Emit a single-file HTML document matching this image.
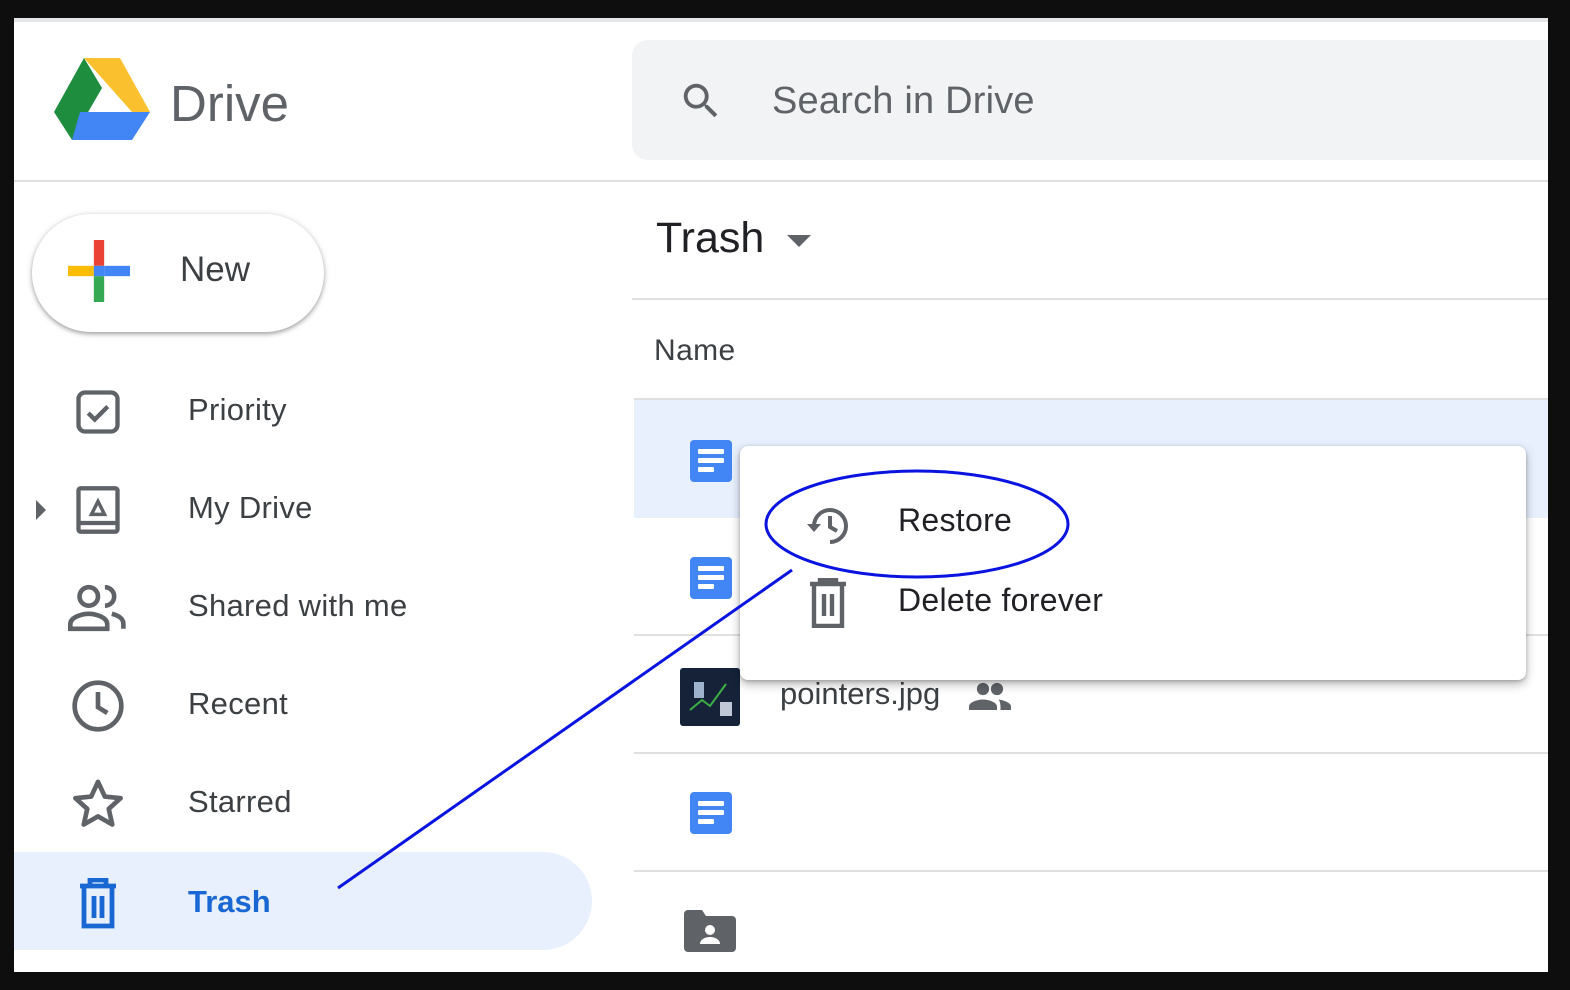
<!DOCTYPE html>
<html><head><meta charset="utf-8"><style>
*{margin:0;padding:0;box-sizing:border-box}
body{width:1570px;height:990px;background:#0e0e0e;position:relative;overflow:hidden;font-family:"Liberation Sans",Arial,sans-serif}
.page{position:absolute;left:14px;top:18px;width:1534px;height:954px;background:#fff;border-top:4px solid #e4e6e8;overflow:hidden}
.abs{position:absolute}
.nav{position:absolute;left:0;width:100%;height:60px}
.nav .lbl{position:absolute;left:174px;top:12px;font-size:31px;color:#3c4043;letter-spacing:.3px}
.hr{position:absolute;height:2px;background:#e0e0e0}
.doc{position:absolute;width:42px;height:42px;background:#4285f4;border-radius:4px}
.doc i{position:absolute;left:8px;height:5px;background:#fff;border-radius:1px}
</style></head><body>
<div class="page">
 <svg class="abs" style="left:40px;top:36px" width="96" height="86" viewBox="0 0 96 86">
  <polygon points="30,0 66,0 96,54 78,54" fill="#fbc02d"/>
  <polygon points="30,0 48,30 18,82 0,54" fill="#1e8e3e"/>
  <polygon points="26,54 96,54 78,82 18,82" fill="#4285f4"/>
 </svg>
 <div class="abs" style="left:156px;top:52px;font-size:51px;color:#5f6368">Drive</div>
 <div class="abs" style="left:618px;top:18px;width:940px;height:120px;background:#f1f3f4;border-radius:16px"></div>
 <svg class="abs" style="left:664px;top:56px" width="46" height="46" viewBox="0 0 24 24"><path fill="#5f6368" d="M15.5 14h-.79l-.28-.27A6.47 6.47 0 0016 9.5 6.5 6.5 0 109.5 16c1.61 0 3.09-.59 4.23-1.57l.27.28v.79l5 4.99L20.49 19l-4.99-5zm-6 0C7.01 14 5 11.99 5 9.5S7.01 5 9.5 5 14 7.01 14 9.5 11.99 14 9.5 14z"/></svg>
 <div class="abs" style="left:758px;top:58px;font-size:38px;color:#5f6368;letter-spacing:.2px">Search in Drive</div>
 <div class="hr" style="left:0;top:158px;width:1534px"></div>
 <div class="abs" style="left:18px;top:192px;width:292px;height:118px;border-radius:59px;background:#fff;box-shadow:0 2px 4px rgba(0,0,0,.3),0 1px 8px rgba(0,0,0,.12)"></div>
 <svg class="abs" style="left:54px;top:218px" width="62" height="62" viewBox="0 0 48 48">
  <rect x="0" y="20" width="20" height="8" fill="#fbbc04"/><rect x="20" y="0" width="8" height="20" fill="#ea4335"/>
  <rect x="28" y="20" width="20" height="8" fill="#4285f4"/><rect x="20" y="28" width="8" height="20" fill="#34a853"/>
  <rect x="20" y="20" width="8" height="8" fill="#4285f4"/>
 </svg>
 <div class="abs" style="left:166px;top:228px;font-size:35px;color:#3c4043">New</div>
 <div class="nav" style="top:358px"><svg class="abs" style="left:58px;top:6px" width="52" height="52" viewBox="0 0 24 24"><rect x="3" y="3" width="18" height="18" rx="3" fill="none" stroke="#5f6368" stroke-width="2"/><path d="M7.5 12.5l3 3 6-6" fill="none" stroke="#5f6368" stroke-width="2"/></svg><div class="lbl">Priority</div></div>
 <div class="nav" style="top:456px"><svg class="abs" style="left:20px;top:20px" width="14" height="24"><path d="M2 2l10 10-10 10z" fill="#5f6368"/></svg><svg class="abs" style="left:58px;top:6px" width="52" height="52" viewBox="0 0 24 24"><rect x="3" y="2" width="18" height="20" rx="1" fill="none" stroke="#5f6368" stroke-width="2"/><line x1="3" y1="18" x2="21" y2="18" stroke="#5f6368" stroke-width="2"/><path d="M9 14l3-6 3 6z" fill="none" stroke="#5f6368" stroke-width="1.6"/></svg><div class="lbl">My Drive</div></div>
 <div class="nav" style="top:554px"><svg class="abs" style="left:54px;top:6px" width="60" height="52" viewBox="0 0 26 22"><circle cx="9" cy="6" r="4" fill="none" stroke="#5f6368" stroke-width="2"/><path d="M1 20v-2c0-3 5-4.5 8-4.5s8 1.5 8 4.5v2z" fill="none" stroke="#5f6368" stroke-width="2"/><path d="M16 2a4 4 0 010 8M19 13.5c3 .8 5 2 5 4.5v2" fill="none" stroke="#5f6368" stroke-width="2"/></svg><div class="lbl">Shared with me</div></div>
 <div class="nav" style="top:652px"><svg class="abs" style="left:56px;top:4px" width="56" height="56" viewBox="0 0 24 24"><circle cx="12" cy="12" r="10" fill="none" stroke="#5f6368" stroke-width="2"/><path d="M12 6v6.5l4 2.5" fill="none" stroke="#5f6368" stroke-width="2"/></svg><div class="lbl">Recent</div></div>
 <div class="nav" style="top:750px"><svg class="abs" style="left:56px;top:4px" width="56" height="56" viewBox="0 0 24 24"><path d="M12 2.5l2.9 6.3 6.8.7-5.1 4.6 1.5 6.7L12 17.3l-6.1 3.5 1.5-6.7L2.3 9.5l6.8-.7z" fill="none" stroke="#5f6368" stroke-width="2" stroke-linejoin="round"/></svg><div class="lbl">Starred</div></div>
 <div class="abs" style="left:-40px;top:830px;width:618px;height:98px;border-radius:0 49px 49px 0;background:#e8f0fe"></div>
 <div class="nav" style="top:850px"><svg class="abs" style="left:60px;top:6px" width="48" height="52" viewBox="0 0 24 26"><path d="M3 4h18M8 4V1h8v3M5 4v20h14V4" fill="none" stroke="#1967d2" stroke-width="2.4"/><path d="M10 9v11M14 9v11" stroke="#1967d2" stroke-width="2.4"/></svg><div class="lbl" style="color:#1967d2;font-weight:bold;letter-spacing:0">Trash</div></div>
 <div class="abs" style="left:642px;top:192px;font-size:43px;color:#202124">Trash</div>
 <svg class="abs" style="left:772px;top:212px" width="26" height="14"><path d="M1 1h24L13 13z" fill="#5f6368"/></svg>
 <div class="hr" style="left:618px;top:276px;width:916px"></div>
 <div class="abs" style="left:640px;top:312px;font-size:30px;color:#3c4043;letter-spacing:.4px">Name</div>
 <div class="hr" style="left:620px;top:376px;width:914px"></div>
 <div class="abs" style="left:620px;top:378px;width:914px;height:118px;background:#e8f0fe"></div>
 <div class="doc" style="left:676px;top:418px"><i style="top:9px;width:26px"></i><i style="top:18px;width:26px"></i><i style="top:27px;width:16px"></i></div>
 <div class="doc" style="left:676px;top:535px"><i style="top:9px;width:26px"></i><i style="top:18px;width:26px"></i><i style="top:27px;width:16px"></i></div>
 <div class="hr" style="left:620px;top:612px;width:914px"></div>
 <div class="abs" style="left:666px;top:646px;width:60px;height:58px;background:#152238;border-radius:3px;overflow:hidden">
  <div class="abs" style="left:14px;top:14px;width:10px;height:16px;background:#9fb3cc"></div>
  <svg class="abs" style="left:0;top:0" width="60" height="58"><path d="M10 42l12-10 8 6 16-22" fill="none" stroke="#3cb043" stroke-width="2"/><rect x="40" y="34" width="12" height="14" fill="#c0c8d8"/></svg>
 </div>
 <div class="abs" style="left:766px;top:654px;font-size:31px;color:#3c4043">pointers.jpg</div>
 <svg class="abs" style="left:954px;top:660px" width="44" height="28" viewBox="0 0 24 16"><circle cx="8" cy="4" r="3.5" fill="#5f6368"/><circle cx="16" cy="4" r="3.5" fill="#5f6368"/><path d="M0 16v-2c0-2.5 5-4 8-4s8 1.5 8 4v2zM17 10c3 .5 7 1.8 7 4v2h-6v-2c0-1.5-.4-2.8-1-4z" fill="#5f6368"/></svg>
 <div class="hr" style="left:620px;top:730px;width:914px"></div>
 <div class="doc" style="left:676px;top:770px"><i style="top:9px;width:26px"></i><i style="top:18px;width:26px"></i><i style="top:27px;width:16px"></i></div>
 <div class="hr" style="left:620px;top:848px;width:914px"></div>
 <svg class="abs" style="left:670px;top:888px" width="52" height="42" viewBox="0 0 26 21"><path d="M0 2a2 2 0 012-2h7l2 3h13a2 2 0 012 2v14a2 2 0 01-2 2H2a2 2 0 01-2-2z" fill="#5f6368"/><circle cx="13" cy="10" r="2.5" fill="#fff"/><path d="M8 17c0-2.5 3-3.5 5-3.5s5 1 5 3.5z" fill="#fff"/></svg>
 <div class="abs" style="left:726px;top:424px;width:786px;height:234px;background:#fff;border-radius:8px;box-shadow:0 4px 10px rgba(0,0,0,.3),0 1px 3px rgba(0,0,0,.2)"></div>
 <svg class="abs" style="left:790px;top:480px" width="48" height="48" viewBox="0 0 24 24"><path d="M5 12a8 8 0 118 8" fill="none" stroke="#5f6368" stroke-width="2"/><path d="M1.5 11h7L5 15z" fill="#5f6368"/><path d="M13 7v5.5l3.5 2" fill="none" stroke="#5f6368" stroke-width="2"/></svg>
 <div class="abs" style="left:884px;top:480px;font-size:32px;color:#202124;letter-spacing:.3px">Restore</div>
 <svg class="abs" style="left:794px;top:556px" width="40" height="50" viewBox="0 0 20 25"><path d="M1 3h18M6 3V1h8v2M3 3v21h14V3" fill="none" stroke="#5f6368" stroke-width="2.2"/><path d="M8 8v11M12 8v11" stroke="#5f6368" stroke-width="2.2"/></svg>
 <div class="abs" style="left:884px;top:560px;font-size:32px;color:#202124;letter-spacing:.3px">Delete forever</div>
 <svg class="abs" style="left:0;top:0" width="1534" height="954"><ellipse cx="903" cy="502" rx="151" ry="53" fill="none" stroke="#0a14e0" stroke-width="3"/><line x1="778" y1="548" x2="324" y2="866" stroke="#0a14e0" stroke-width="3"/></svg>
</div>
</body></html>
